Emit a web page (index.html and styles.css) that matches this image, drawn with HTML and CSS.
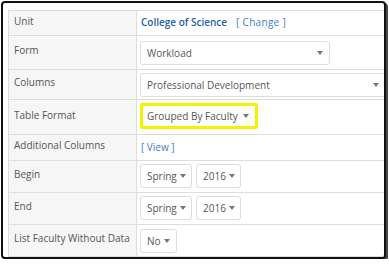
FILE: index.html
```html
<!DOCTYPE html>
<html>
<head>
<meta charset="utf-8">
<title>Report Options</title>
<link rel="stylesheet" href="styles.css">
</head>
<body>
<div class="frame">
  <div class="options">
    <div class="row r-unit">
      <div class="label">Unit</div>
      <div class="value mid"><a class="unit">College of Science</a><a class="link change">[ Change ]</a></div>
    </div>
    <div class="row r-form">
      <div class="label">Form</div>
      <div class="value top5"><span class="select w-form">Workload<i class="caret"></i></span></div>
    </div>
    <div class="row r-cols">
      <div class="label">Columns</div>
      <div class="value"><span class="select w-cols">Professional Development<i class="caret"></i></span></div>
    </div>
    <div class="row r-fmt">
      <div class="label">Table Format</div>
      <div class="value"><span class="select w-fmt hilite">Grouped By Faculty<i class="caret"></i></span></div>
    </div>
    <div class="row r-add">
      <div class="label">Additional Columns</div>
      <div class="value mid"><a class="link">[ View ]</a></div>
    </div>
    <div class="row r-begin">
      <div class="label">Begin</div>
      <div class="value"><span class="select w-term">Spring<i class="caret"></i></span><span class="select w-year">2016<i class="caret"></i></span></div>
    </div>
    <div class="row r-end">
      <div class="label">End</div>
      <div class="value"><span class="select w-term">Spring<i class="caret"></i></span><span class="select w-year">2016<i class="caret"></i></span></div>
    </div>
    <div class="row r-list">
      <div class="label">List Faculty Without Data</div>
      <div class="value top4"><span class="select w-no">No<i class="caret"></i></span></div>
    </div>
  </div>
</div>
</body>
</html>
```

FILE: styles.css
```css
*{margin:0;padding:0;box-sizing:border-box;}
body{background:#fff;font-family:"Open Sans","DejaVu Sans",sans-serif;font-size:10px;color:#555;}
.frame{margin:1px 0 0 1px;width:385px;height:258px;border:2px solid #111;border-radius:4px;box-shadow:2px 2px 0 #4a4a4a;overflow:hidden;padding:7px 0 0 5px;background:#fff;}
.options{border-top:1px solid #ddd;border-left:1px solid #ddd;width:400px;}
.row{display:grid;grid-template-columns:128px 1fr;border-bottom:1px solid #ddd;}
.r-unit{height:25px;}
.r-form{height:34px;}
.r-cols{height:30px;}
.r-fmt{height:35px;}
.r-add{height:26px;}
.r-begin,.r-end,.r-list{height:32px;}
.label{background:#f6f6f6;border-right:1px solid #ddd;display:flex;align-items:center;padding:0 0 5px 5px;line-height:14px;white-space:nowrap;}
.value{display:flex;align-items:flex-start;gap:4px;padding:3px 0 0 3px;white-space:nowrap;}
.value.mid{align-items:center;padding:0 0 2px 4px;gap:9px;}
.value.top5{padding-top:5px;}
.value.top4{padding-top:4px;}
.unit{color:#1f5fa8;font-weight:600;}
.link{color:#3b80c6;}
.change{letter-spacing:0.3px;}
.select{display:flex;align-items:center;justify-content:space-between;height:24px;border:1px solid #ddd;border-radius:3px;background:#fff;padding:0 6px 0 6px;color:#555;}
.caret{display:block;width:0;height:0;border-left:3.5px solid transparent;border-right:3.5px solid transparent;border-top:4px solid #777;}
.w-form{width:190px;}
.w-cols{width:254px;padding-right:14px;}
.w-fmt{width:118px;height:26px;}
.hilite{border:3px solid #f5f200;border-radius:2px;padding:0 8px 0 4px;justify-content:flex-start;gap:5px;}
.w-term{width:52px;padding-right:5px;}
.w-year{width:45px;padding-right:5px;}
.w-no{width:37px;padding-right:6px;}
```
